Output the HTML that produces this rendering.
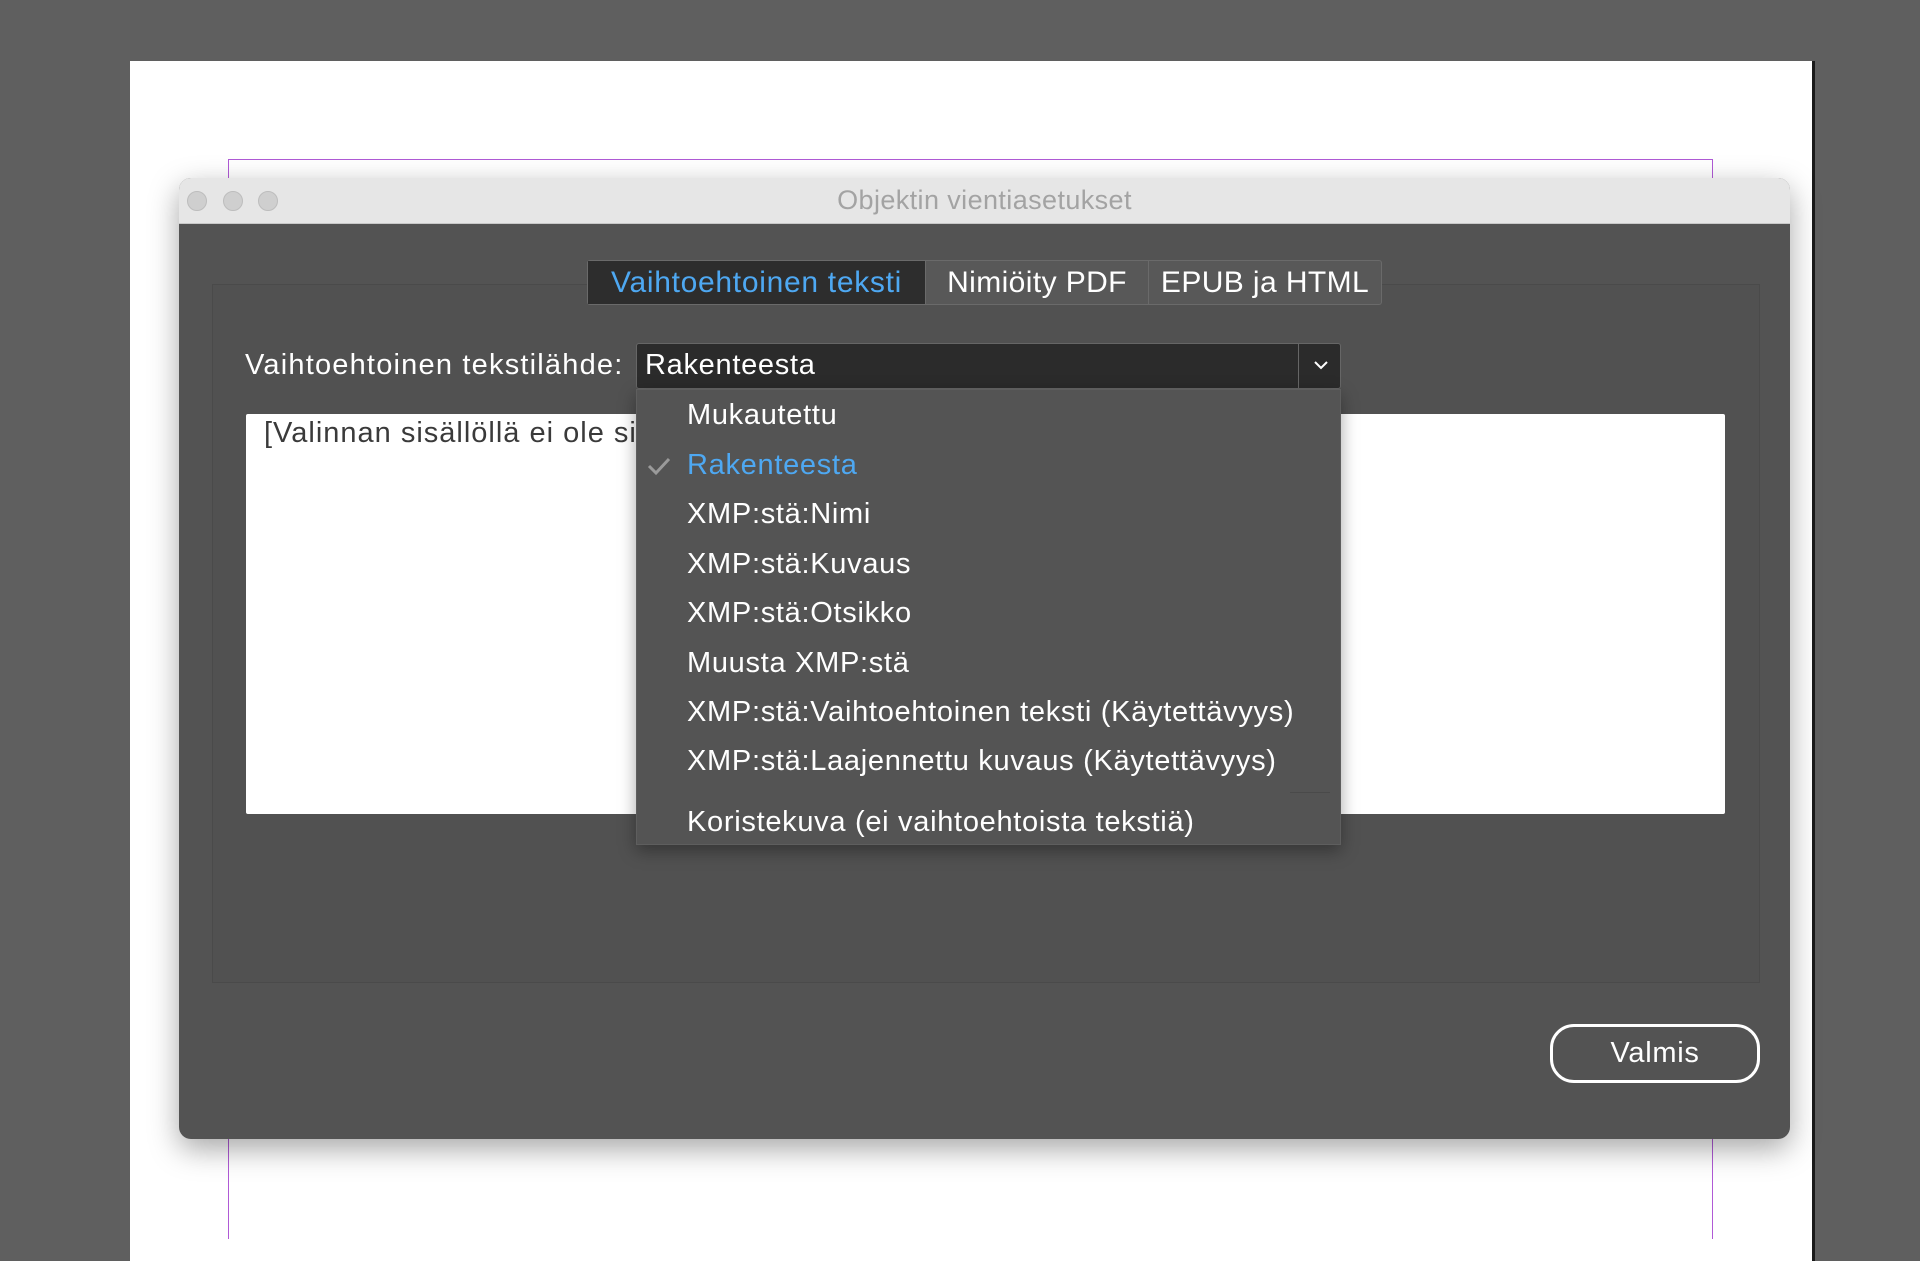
<!DOCTYPE html>
<html><head><meta charset="utf-8"><style>
*{margin:0;padding:0;box-sizing:border-box}
body{width:1920px;height:1239px;background:#5f5f5f;position:relative;overflow:hidden;font-family:"Liberation Sans","DejaVu Sans",sans-serif}
.a{position:absolute}
.page{left:130px;top:61px;width:1685px;height:1200px;background:#fff;border-right:3px solid #1a1a1a}
.mv{width:1px;background:#b05ad6}
.dlg{left:179px;top:178px;width:1611px;height:961px;background:#535353;border-radius:12px;box-shadow:0 10px 30px rgba(0,0,0,.35);overflow:hidden}
.tb{left:0;top:0;width:100%;height:46px;background:#e6e6e6;border-bottom:1px solid #c8c8c8}
.dot{width:20px;height:20px;border-radius:50%;background:#cfcfcf;border:1px solid #bdbdbd;top:13px}
.t{color:#fff;font-size:29px;letter-spacing:.7px;white-space:nowrap}
.mi{color:#fff;font-size:29px;letter-spacing:.7px;left:687px;white-space:nowrap}
.tab{font-size:30px;letter-spacing:.4px;line-height:43px;text-align:center;color:#fff}
</style></head><body>
<div class="a page"></div>
<div class="a" style="left:228px;top:159px;width:1485px;height:1px;background:#b05ad6"></div>
<div class="a mv" style="left:228px;top:159px;height:1080px"></div>
<div class="a mv" style="left:1712px;top:159px;height:1080px"></div>
<div class="a dlg">
 <div class="a tb">
  <div class="a dot" style="left:8px"></div>
  <div class="a dot" style="left:44px"></div>
  <div class="a dot" style="left:79px"></div>
  <div class="a" style="left:0;width:100%;top:7px;text-align:center;color:#a3a3a3;font-size:27px;letter-spacing:.4px">Objektin vientiasetukset</div>
 </div>
 <div class="a" style="left:33px;top:106px;width:1548px;height:699px;border:1px solid #4a4a4a;background:#515151"></div>
 <div class="a" style="left:408px;top:82px;width:795px;height:45px;border:1px solid #6a6a6a;border-radius:3px;background:#585858;display:flex">
  <div class="tab" style="width:337px;background:#2d2d2d;color:#4ea8f2;letter-spacing:.7px">Vaihtoehtoinen teksti</div>
  <div class="tab" style="width:223px;border-left:1px solid #6a6a6a">Nimiöity PDF</div>
  <div class="tab" style="flex:1;border-left:1px solid #6a6a6a">EPUB ja HTML</div>
 </div>
 <div class="a t" style="left:66px;top:171px;letter-spacing:1.2px">Vaihtoehtoinen tekstilähde:</div>
 <div class="a" style="left:457px;top:165px;width:705px;height:46px;background:#2b2b2b;border:1px solid #666;border-radius:3px">
  <div class="a t" style="left:8px;top:5px">Rakenteesta</div>
  <div class="a" style="left:661px;top:0;width:1px;height:44px;background:#666"></div>
  <svg class="a" style="left:675px;top:14px" width="18" height="14"><path d="M3 4 L9 10 L15 4" stroke="#fff" stroke-width="2" fill="none"/></svg>
 </div>
 <div class="a" style="left:67px;top:236px;width:1479px;height:400px;background:#fff;border-radius:2px">
  <div class="a" style="left:18px;top:3px;color:#3a3a3a;font-size:29px;letter-spacing:1px;white-space:nowrap">[Valinnan sisällöllä ei ole si</div>
 </div>
 <div class="a" style="left:457px;top:211px;width:705px;height:456px;background:#545454;border:1px solid #5e5e5e;box-shadow:0 6px 16px rgba(0,0,0,.35)"></div>
</div>
<div class="a mi" style="top:399px">Mukautettu</div>
<svg class="a" style="left:646px;top:455px" width="26" height="22"><path d="M3 11 L10 18 L23 4" stroke="#9a9a9a" stroke-width="3" fill="none"/></svg>
<div class="a mi" style="top:449px;color:#4ea8f2">Rakenteesta</div>
<div class="a mi" style="top:498px">XMP:stä:Nimi</div>
<div class="a mi" style="top:548px">XMP:stä:Kuvaus</div>
<div class="a mi" style="top:597px">XMP:stä:Otsikko</div>
<div class="a mi" style="top:647px">Muusta XMP:stä</div>
<div class="a mi" style="top:696px">XMP:stä:Vaihtoehtoinen teksti (Käytettävyys)</div>
<div class="a mi" style="top:745px">XMP:stä:Laajennettu kuvaus (Käytettävyys)</div>
<div class="a" style="left:1290px;top:792px;width:40px;height:1px;background:#4a4a4a"></div>
<div class="a mi" style="top:806px">Koristekuva (ei vaihtoehtoista tekstiä)</div>
<div class="a" style="left:1550px;top:1024px;width:210px;height:59px;border:3px solid #fff;border-radius:24px;color:#fff;font-size:29px;letter-spacing:.7px;text-align:center;line-height:52px">Valmis</div>
</body></html>
